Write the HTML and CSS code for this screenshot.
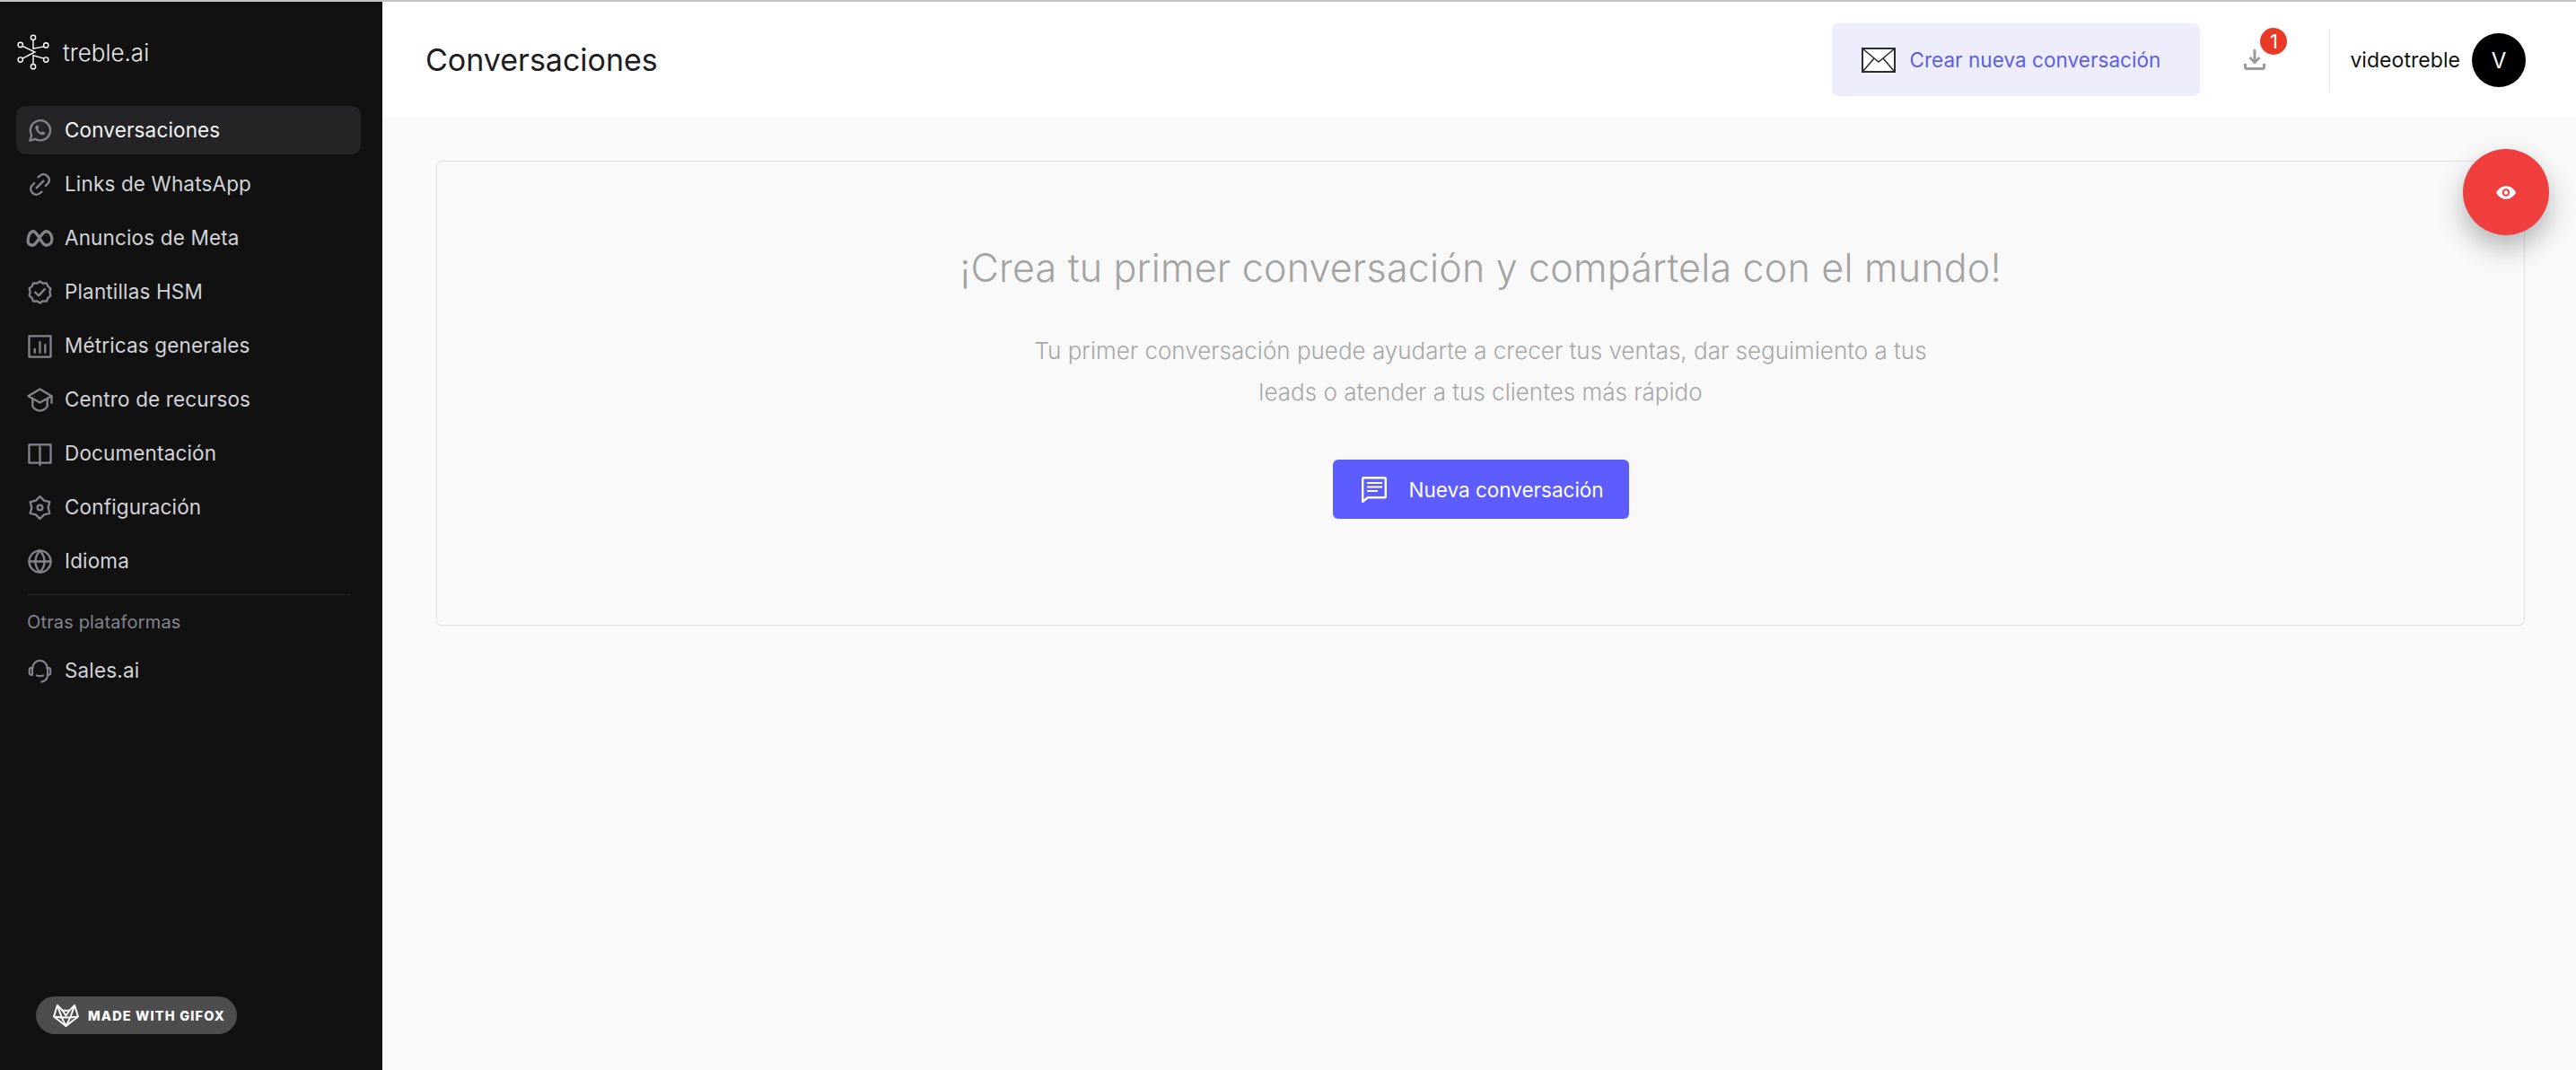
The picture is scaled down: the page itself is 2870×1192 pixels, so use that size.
FILE: index.html
```html
<!DOCTYPE html>
<html lang="es">
<head>
<meta charset="utf-8">
<title>Conversaciones - treble.ai</title>
<link rel="stylesheet" href="styles.css">
</head>
<body>
<div class="topline"></div>
<div class="app">
  <aside class="sidebar">
    <div class="logo">
      <svg class="logo-mark" viewBox="0 0 40 42" fill="none" stroke="#fff" stroke-width="1.500">
        <circle cx="20" cy="4" r="2.800"/><circle cx="35" cy="13" r="2.800"/><circle cx="35" cy="30" r="2.800"/><circle cx="20" cy="38" r="2.800"/><circle cx="5" cy="30" r="2.800"/><circle cx="5" cy="12.500" r="2.800"/>
        <path d="M20 7V17L32.500 14.500M20 35V25L32.500 28.500M7.500 14L22 21 7.500 28.500"/>
      </svg>
      <span class="logo-text">treble.ai</span>
    </div>
    <nav class="nav">
      <a class="nav-item active"><svg class="nav-icon" viewBox="0 0 28 28"><path d="M2.500 25.500l1.800-6.300A11.500 11.500 0 1 1 8.800 23.800z"/><path class="fine" d="M10 8c-1.800 1-1.800 3.300 0 6 1.700 2.800 4.300 5 7 5 1.700 0 2.800-1 3.200-2.500l-3.300-1.700-1.300 1.400c-1.800-.7-3.200-2.200-4-4l1.300-1.300L11.500 7.500z"/></svg><span>Conversaciones</span></a>
      <a class="nav-item"><svg class="nav-icon" viewBox="0 0 28 28"><path d="M12 5.500l2.500-2a6.500 6.500 0 0 1 9 9l-3 3"/><path d="M16 22.500l-2.500 2a6.500 6.500 0 0 1-9-9l3-3"/><path d="M10 18l8-8"/></svg><span>Links de WhatsApp</span></a>
      <a class="nav-item"><svg class="nav-icon wide meta" viewBox="0 0 30 20"><path d="M2 13C2 7.500 4.500 2.500 8 2.500c4.500 0 8.500 15 13.500 15 3.800 0 6.500-2.500 6.500-6.800 0-4.700-2.800-8.200-6.500-8.200C16.500 2.500 12 17.500 7 17.500c-3 0-5-1.800-5-4.500z"/></svg><span>Anuncios de Meta</span></a>
      <a class="nav-item"><svg class="nav-icon" viewBox="0 0 28 28"><path d="M14 1.500l3.500 2.300 4.200-.3 1.400 3.700 3.200 2.600-1 4.200 1 4-3.200 2.800-1.400 3.700-4.200-.3-3.500 2.300-3.500-2.300-4.200.3-1.400-3.700-3.200-2.800 1-4-1-4.200 3.200-2.600L6.300 3.500l4.200.3z"/><path d="M8.500 14l4 4L19.500 10.500"/></svg><span>Plantillas HSM</span></a>
      <a class="nav-item"><svg class="nav-icon" viewBox="0 0 28 28"><path d="M1.500 2.500h25v24h-25z"/><path d="M8 21.500v-4M14 21.500V9.500M20 21.500v-9"/></svg><span>Métricas generales</span></a>
      <a class="nav-item"><svg class="nav-icon wide" viewBox="0 0 30 28"><path d="M15 1.500L1.500 9.500 15 17l13.500-7.500z"/><path d="M6.500 13v8.500c2 3 5.500 5 8.500 5s6.500-2 8.500-5V13M28.500 9.500v8"/></svg><span>Centro de recursos</span></a>
      <a class="nav-item"><svg class="nav-icon" viewBox="0 0 28 28"><path d="M14 6v21M14 3.500H1.500v21h25v-21z"/></svg><span>Documentación</span></a>
      <a class="nav-item"><svg class="nav-icon" viewBox="0 0 28 28"><path d="M14 1l4.750 4.770 6.500 1.730-1.750 6.500 1.750 6.500-6.500 1.730L14 27l-4.750-4.770-6.500-1.730L4.500 14 2.750 7.500l6.500-1.730z"/><circle cx="14" cy="14" r="3"/></svg><span>Configuración</span></a>
      <a class="nav-item"><svg class="nav-icon" viewBox="0 0 28 28"><circle cx="14" cy="14" r="12.500"/><path d="M1.500 14h25M14 1.500c-7 7.500-7 17.500 0 25M14 1.500c7 7.500 7 17.500 0 25"/></svg><span>Idioma</span></a>
    </nav>
    <div class="side-divider"></div>
    <div class="side-label">Otras plataformas</div>
    <a class="nav-item"><svg class="nav-icon wide" viewBox="0 0 30 30"><path d="M6 12C6 6 10 2 15 2s9 4 9 10"/><path d="M5.500 11C3 11 2 12 2 13.500v4C2 19 3 20 5.500 20zM24.500 11c2.500 0 3.500 1 3.500 2.500v4c0 1.500-1 2.500-3.500 2.500z"/><path d="M24.500 20c0 4.500-3 7.500-7.500 8.500M11 20.500c2.500 1 5 1 8 0"/></svg><span>Sales.ai</span></a>
    <div class="gifox">
      <svg class="fox" viewBox="0 0 32 28" fill="none" stroke="#fff" stroke-width="2" stroke-linejoin="round"><path d="M6 2l6 6h8l6-6 4 13-14 11L2 15z"/><path d="M2 15l9 1 5 10 5-10 9-1M6 2l5 14M26 2l-5 14M12 8l4 6 4-6M11 16h10"/></svg>
      <span>MADE WITH GIFOX</span>
    </div>
  </aside>
  <main class="main">
    <header class="header">
      <h1 class="title">Conversaciones</h1>
      <a class="create-btn">
        <svg class="mail" viewBox="0 0 38 28" fill="#fff" stroke="#2e2e30" stroke-width="2"><path d="M1 1h36v26H1z"/><path d="M1 1l18 15L37 1M1 27l13-15M37 27L24 12" fill="none" stroke-width="1.600"/></svg>
        <span>Crear nueva conversación</span>
      </a>
      <div class="download">
        <svg class="download-icon" viewBox="0 0 24 24" fill="none" stroke="#9b9b9b" stroke-width="3"><path d="M12 1v14M6.500 10l5.500 5.500L17.500 10"/><path d="M1.500 17v3.500q0 2 2 2h17q2 0 2-2V17" /></svg>
        <span class="badge">1</span>
      </div>
      <div class="user">
        <span class="user-name">videotreble</span>
        <span class="avatar">V</span>
      </div>
    </header>
    <section class="content">
      <div class="card">
        <h2 class="card-title">¡Crea tu primer conversación y compártela con el mundo!</h2>
        <p class="card-text">Tu primer conversación puede ayudarte a crecer tus ventas, dar seguimiento a tus<br>leads o atender a tus clientes más rápido</p>
        <a class="new-btn">
          <svg class="chat" viewBox="0 0 30 30" fill="none" stroke="#fff" stroke-width="2.400"><path d="M2.200 3.200q0-1 1-1h23.600q1 0 1 1v20q0 1-1 1H8l-5.800 4.800z"/><path d="M7 8h17M7 12.500h17M7 17h12" stroke-width="2.200"/></svg>
          <span>Nueva conversación</span>
        </a>
      </div>
    </section>
  </main>
</div>
<button class="fab" aria-label="Ver">
  <svg viewBox="0 0 24 16" width="22" height="15"><path fill="#fff" d="M12 0C6.500 0 2 4 0 8c2 4 6.500 8 12 8s10-4 12-8c-2-4-6.500-8-12-8z"/><circle cx="12" cy="8" r="4.600" fill="#f03e3e"/><circle cx="12" cy="8" r="2.500" fill="#fff"/></svg>
</button>
</body>
</html>
```

FILE: styles.css
```css
* { box-sizing: border-box; }
html, body { margin: 0; height: 100%; }
body {
  font-family: Inter, "Noto Sans", sans-serif;
  background: #f9f9f9;
  overflow: hidden;
  display: flex;
  flex-direction: column;
  position: relative;
}
.topline { height: 2px; background: #c4c4c4; flex: none; }
.app { flex: 1; display: flex; min-height: 0; }

.sidebar {
  width: 426px;
  flex: none;
  background: #111112;
  display: flex;
  flex-direction: column;
  padding: 0 24px 0 18px;
}
.logo { display: flex; align-items: center; height: 116px; gap: 14px; padding-bottom: 4px; }
.logo-mark { width: 38px; height: 40px; flex: none; }
.logo-text { color: #e9e9ea; font-size: 26px; font-weight: 300; }

.nav { display: flex; flex-direction: column; gap: 6px; }
.nav-item {
  display: flex;
  align-items: center;
  height: 54px;
  border-radius: 10px;
  padding-left: 13px;
  gap: 14px;
  color: #d3d3d8;
  font-size: 22.500px;
  letter-spacing: 0.150px;
}
.nav-item span { padding-bottom: 2px; }
.nav-item.active { background: #242427; color: #f3f3f4; }
.nav-icon {
  width: 27px;
  height: 27px;
  flex: none;
  fill: none;
  stroke: #85848d;
  stroke-width: 2.400;
  stroke-linejoin: round;
  stroke-linecap: round;
}
.nav-icon .fine { fill: #85848d; stroke: none; }
.nav-icon.wide { width: 31px; margin: 0 -2px; }
.nav-icon.meta { stroke-width: 3.200; }
.side-divider { height: 1px; background: #27272a; margin: 10px 12px 0; flex: none; }
.side-label {
  margin: 18px 0 0 12px;
  color: #85848d;
  font-size: 20px;
  letter-spacing: 0.150px;
  line-height: 24px;
  height: 39px;
}

.gifox {
  margin: auto 0 40px 22px;
  width: 224px;
  height: 42px;
  border-radius: 21px;
  background: #4d4d4d;
  display: flex;
  align-items: center;
  gap: 9px;
  padding-left: 18px;
  color: #fff;
  font-size: 14.500px;
  font-weight: 800;
  letter-spacing: 1.150px;
  white-space: nowrap;
}
.fox { width: 31px; height: 27px; flex: none; }

.main { flex: 1; min-width: 0; display: flex; flex-direction: column; }
.header {
  height: 128px;
  background: #fff;
  display: flex;
  align-items: center;
  padding: 0 56px 0 48px;
  flex: none;
}
.title { margin: 0 auto 0 0; font-size: 34px; font-weight: 400; color: #1d1d1f; }
.create-btn {
  width: 410px;
  height: 81px;
  margin-top: 1px;
  border-radius: 7px;
  background: #eeedfd;
  display: flex;
  align-items: center;
  gap: 15px;
  padding-left: 33px;
  color: #5b60e2;
  font-size: 22.500px;
  letter-spacing: 0.050px;
  white-space: nowrap;
}
.mail { width: 38px; height: 28px; flex: none; }
.download { position: relative; width: 24px; height: 24px; margin: 0 71px 0 49px; }
.download-icon { width: 24px; height: 24px; display: block; }
.badge {
  position: absolute;
  left: 18px;
  top: -23px;
  width: 30px;
  height: 30px;
  border-radius: 50%;
  background: #e93a27;
  color: #fff;
  font-size: 22px;
  line-height: 30px;
  text-align: center;
}
.user {
  height: 71px;
  margin-top: 2px;
  border-left: 1px solid #e6e6e6;
  padding-left: 22px;
  display: flex;
  align-items: center;
  gap: 13px;
}
.user-name { font-size: 23px; color: #111; letter-spacing: 0.050px; }
.avatar {
  width: 60px;
  height: 60px;
  border-radius: 50%;
  background: #000;
  color: #fff;
  font-size: 24px;
  display: flex;
  align-items: center;
  justify-content: center;
}

.content { flex: 1; padding: 49px 57px 0 60px; }
.card {
  height: 518px;
  border: 1px solid #dfe0e4;
  border-radius: 6px;
  display: flex;
  flex-direction: column;
  align-items: center;
}
.card-title {
  margin: 90px 0 0;
  font-size: 43px;
  line-height: 56px;
  font-weight: 300;
  color: #a3a3a3;
  letter-spacing: 0.200px;
  white-space: nowrap;
}
.card-text {
  margin: 42px 0 0;
  font-size: 26px;
  line-height: 46px;
  font-weight: 300;
  color: #a8a8a8;
  text-align: center;
  white-space: nowrap;
}
.new-btn {
  margin-top: 52px;
  width: 330px;
  height: 66px;
  border-radius: 6px;
  background: #5c5cff;
  display: flex;
  align-items: center;
  gap: 24px;
  padding-left: 31px;
  color: #fff;
  font-size: 22.500px;
  white-space: nowrap;
}
.chat { width: 30px; height: 30px; flex: none; }

.fab {
  position: absolute;
  left: 2744px;
  top: 166px;
  width: 96px;
  height: 96px;
  border: 0;
  border-radius: 50%;
  background: #f03e3e;
  box-shadow: 0 14px 30px rgba(0, 0, 0, 0.28);
  display: flex;
  align-items: center;
  justify-content: center;
  padding: 0;
}
```
